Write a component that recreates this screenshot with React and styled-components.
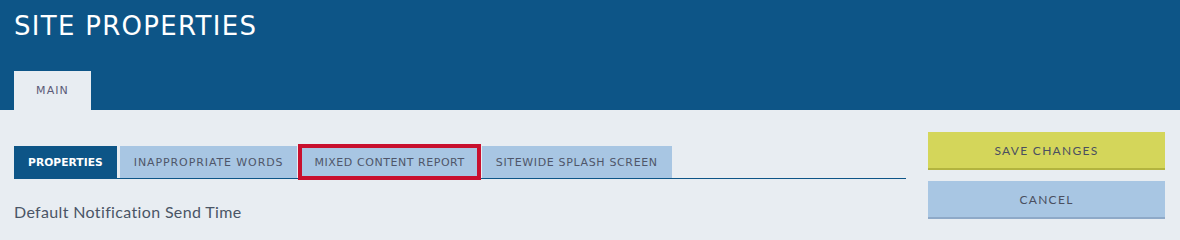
import React from "react";
import styled, { createGlobalStyle } from "styled-components";

const GlobalStyle = createGlobalStyle`
  html, body {
    margin: 0;
    padding: 0;
    height: 228px;
    overflow: hidden;
    background-color: #e8edf2;
  }
  * {
    box-sizing: border-box;
  }
`;

const Header = styled.div`
  height: 110px;
  background-color: #0d5587;
  padding: 11px 14px 0 14px;
  display: flex;
  flex-direction: column;
  justify-content: space-between;
`;
const Title = styled.h1`
  margin: 0;
  color: #ffffff;
  font-family: "DejaVu Sans", Verdana, sans-serif;
  font-size: 26px;
  font-weight: 400;
  letter-spacing: 1.3px;
  line-height: 30px;
`;
const PageTabs = styled.div`
  display: flex;
`;
const PageTab = styled.div`
  width: 77px;
  height: 39px;
  display: flex;
  align-items: center;
  justify-content: center;
  background-color: #e8edf2;
  color: #5b5a78;
  font-family: "DejaVu Sans", Verdana, sans-serif;
  font-size: 11px;
  letter-spacing: 1.1px;
`;

const Body = styled.div`
  display: flex;
  gap: 22px;
  padding: 0 15px 0 14px;
`;
const Main = styled.div`
  flex: 1;
  padding-top: 36px;
`;
const SubTabs = styled.div`
  display: flex;
  gap: 3px;
  border-bottom: 1.5px solid #0d5587;
`;
const SubTab = styled.div`
  position: relative;
  height: 32px;
  padding: 0 14px;
  display: flex;
  align-items: center;
  background-color: ${(p) => (p.active ? "#0d5587" : "#a8c6e3")};
  color: ${(p) => (p.active ? "#ffffff" : "#4f566a")};
  font-family: "DejaVu Sans", Verdana, sans-serif;
  font-size: ${(p) => (p.active ? "10.7px" : "11px")};
  font-weight: ${(p) => (p.active ? 700 : 400)};
  letter-spacing: ${(p) => p.spacing};
  white-space: nowrap;
  outline: ${(p) => (p.marked ? "4px solid #c8102e" : "none")};
  outline-offset: -2px;
  z-index: ${(p) => (p.marked ? 1 : 0)};
`;
const FieldLabel = styled.div`
  margin-top: 23px;
  color: #4a5566;
  font-family: Lato, "Open Sans", sans-serif;
  font-size: 16px;
  letter-spacing: 0.35px;
`;

const Side = styled.div`
  width: 237px;
  padding-top: 22px;
  display: flex;
  flex-direction: column;
  gap: 11px;
`;
const ActionButton = styled.button`
  height: 38px;
  width: 100%;
  border: 0;
  border-bottom: 2px solid ${(p) => (p.primary ? "#b3b43f" : "#8ea9c8")};
  background-color: ${(p) => (p.primary ? "#d4d65a" : "#a8c6e3")};
  color: #4a4f60;
  font-family: Lato, "Open Sans", sans-serif;
  font-size: 12px;
  letter-spacing: 1.3px;
  cursor: pointer;
`;

const tabs = [
  { label: "PROPERTIES", active: true, spacing: "0.05px" },
  { label: "INAPPROPRIATE WORDS", spacing: "0.9px" },
  { label: "MIXED CONTENT REPORT", marked: true, spacing: "0.55px" },
  { label: "SITEWIDE SPLASH SCREEN", spacing: "0.65px" },
];

const App = () => {
  return (
    <>
      <GlobalStyle />
      <Header>
        <Title>SITE PROPERTIES</Title>
        <PageTabs>
          <PageTab>MAIN</PageTab>
        </PageTabs>
      </Header>
      <Body>
        <Main>
          <SubTabs>
            {tabs.map((t) => (
              <SubTab
                key={t.label}
                active={t.active}
                marked={t.marked}
                spacing={t.spacing}
              >
                {t.label}
              </SubTab>
            ))}
          </SubTabs>
          <FieldLabel>Default Notification Send Time</FieldLabel>
        </Main>
        <Side>
          <ActionButton primary>SAVE CHANGES</ActionButton>
          <ActionButton>CANCEL</ActionButton>
        </Side>
      </Body>
    </>
  );
};

export default App;
